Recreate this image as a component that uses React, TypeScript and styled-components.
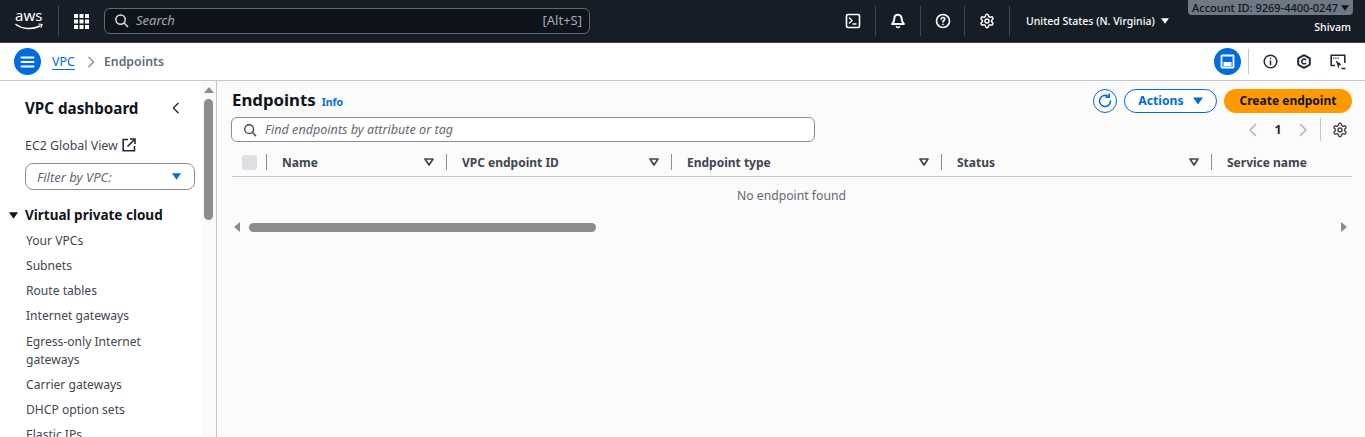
import React from "react";
import styled, { createGlobalStyle } from "styled-components";

const GlobalStyle = createGlobalStyle`
  html, body { margin: 0; padding: 0; height: 100%; overflow: hidden; }
  body { font-family: "Noto Sans", "Open Sans", sans-serif; color: #0f141a; background: #fff; }
  * { box-sizing: border-box; }
`;

const Page = styled.div`
  width: 1365px;
  height: 437px;
  display: flex;
  flex-direction: column;
  overflow: hidden;
`;

const TopBar = styled.header`
  height: 43px;
  flex: none;
  background: #161d26;
  border-bottom: 1px solid #3d4650;
  display: flex;
  align-items: center;
  color: #fff;
`;

const Logo = styled.div`
  width: 58px;
  padding-left: 15px;
  display: flex;
  align-items: center;
`;

const BarDivider = styled.span`
  width: 1px;
  height: 30px;
  background: #424650;
  flex: none;
`;

const AppsButton = styled.div`
  width: 45px;
  display: flex;
  justify-content: center;
`;

const SearchBox = styled.div`
  width: 486px;
  height: 26px;
  margin-top: -1px;
  border: 1px solid #656871;
  border-radius: 6px;
  background: #0f141a;
  display: flex;
  align-items: center;
  padding: 0 7px 1px 9px;
  font-size: 13px;
  color: #a4a9b3;
`;

const SearchText = styled.span`
  font-style: italic;
  margin-left: 7px;
  flex: 1;
`;

const TopIcons = styled.div`
  margin-left: auto;
  display: flex;
  align-items: center;
`;

const TopIcon = styled.div<{ $w: number }>`
  width: ${({ $w }) => $w}px;
  display: flex;
  justify-content: center;
`;

const Region = styled.div`
  width: 175px;
  padding-left: 16px;
  display: flex;
  align-items: center;
  gap: 6px;
  font-size: 10.5px;
  font-weight: 500;
  white-space: nowrap;
`;

const AccountBlock = styled.div`
  width: 180px;
  height: 42px;
  display: flex;
  flex-direction: column;
  align-items: flex-end;
  padding-right: 12px;
`;

const AccountChip = styled.div`
  height: 15px;
  background: #6f7885;
  color: #0f141a;
  font-size: 11px;
  font-weight: 500;
  border-radius: 0 0 4px 4px;
  padding: 0 4px;
  display: flex;
  align-items: center;
  gap: 3px;
  white-space: nowrap;
`;

const UserName = styled.div`
  font-size: 10.5px;
  font-weight: 500;
  margin-top: 5px;
  padding-right: 2px;
`;

const Crumbs = styled.div`
  height: 38px;
  flex: none;
  background: #fff;
  border-bottom: 1px solid #c6c6cd;
  display: flex;
  align-items: center;
  padding: 0 10px 0 14px;
`;

const RoundBlue = styled.div`
  width: 27px;
  height: 27px;
  border-radius: 50%;
  background: #006ce0;
  display: flex;
  align-items: center;
  justify-content: center;
  flex: none;
`;

const CrumbLink = styled.a`
  margin-left: 11px;
  font-size: 12.5px;
  color: #006ce0;
  text-decoration: underline;
  text-underline-offset: 3px;
`;

const CrumbSep = styled.span`
  margin: 0 7px 0 10px;
  display: flex;
`;

const CrumbCurrent = styled.span`
  font-size: 12.3px;
  font-weight: 600;
  color: #5f6b7a;
`;

const CrumbTools = styled.div`
  margin-left: auto;
  display: flex;
  align-items: center;
`;

const CrumbDivider = styled.span`
  width: 1px;
  height: 25px;
  background: #c6c6cd;
  margin: 0 4px 0 7px;
`;

const ToolIcon = styled.div`
  width: 34px;
  display: flex;
  justify-content: center;
`;

const Body = styled.div`
  flex: 1;
  display: flex;
  min-height: 0;
`;

const Side = styled.aside`
  width: 217px;
  flex: none;
  border-right: 1px solid #c6c6cd;
  display: flex;
  background: #fff;
`;

const SideNav = styled.nav`
  width: 202px;
  flex: none;
  padding: 16px 7px 0 9px;
  overflow: hidden;
`;

const SideHead = styled.div`
  display: flex;
  align-items: center;
  justify-content: space-between;
  padding: 0 13px 0 16px;
  font-size: 15.2px;
  font-weight: 700;
  height: 22px;
`;

const GlobalLink = styled.div`
  margin: 16px 0 0 16px;
  font-size: 12.4px;
  color: #424650;
  display: flex;
  align-items: center;
  gap: 4px;
  height: 20px;
`;

const VpcFilter = styled.div`
  margin: 8px 0 0 16px;
  width: 170px;
  height: 27px;
  border: 1px solid #8c8c94;
  border-radius: 8px;
  display: flex;
  align-items: center;
  justify-content: space-between;
  padding: 0 13px 0 11px;
  font-size: 13px;
  font-style: italic;
  color: #656871;
`;

const SectionHead = styled.div`
  margin-top: 14px;
  display: flex;
  align-items: center;
  height: 22px;
  font-size: 13.5px;
  font-weight: 700;
  gap: 7px;
`;

const NavList = styled.ul`
  list-style: none;
  margin: 2.3px 0 0 17px;
  padding: 0;
`;

const NavItem = styled.li`
  font-size: 12.1px;
  line-height: 18px;
  color: #424650;
  padding: 3.6px 0;
`;

const ScrollTrack = styled.div`
  width: 14px;
  flex: none;
  background: #fafafa;
  display: flex;
  flex-direction: column;
  align-items: center;
  padding: 6px 1px 0 0;
`;

const ScrollThumbV = styled.div`
  width: 9px;
  height: 121px;
  margin-top: 6px;
  border-radius: 5px;
  background: #8c8c8c;
`;

const Main = styled.main`
  flex: 1;
  background: #fbfbfb;
  padding: 7px 13px 0 15px;
  min-width: 0;
`;

const HeaderRow = styled.div`
  display: flex;
  align-items: center;
  height: 25px;
`;

const Title = styled.h1`
  margin: -2px 0 0;
  font-size: 16.8px;
  font-weight: 700;
`;

const InfoLink = styled.a`
  margin: 2px 0 0 6px;
  font-size: 10.5px;
  font-weight: 700;
  color: #006ce0;
`;

const Actions = styled.div`
  margin-left: auto;
  display: flex;
  align-items: center;
`;

const RefreshBtn = styled.div`
  width: 24px;
  height: 24px;
  border: 1px solid #006ce0;
  border-radius: 50%;
  display: flex;
  align-items: center;
  justify-content: center;
  margin-right: 7px;
`;

const OutlineBtn = styled.div`
  width: 93px;
  height: 24px;
  border: 1px solid #006ce0;
  border-radius: 12px;
  background: #fff;
  color: #006ce0;
  font-size: 12.2px;
  font-weight: 700;
  display: flex;
  align-items: center;
  justify-content: center;
  gap: 9px;
  margin-right: 7px;
`;

const PrimaryBtn = styled.div`
  width: 128px;
  height: 24px;
  border-radius: 12px;
  background: #ff9900;
  color: #0f141a;
  font-size: 12px;
  font-weight: 700;
  display: flex;
  align-items: center;
  justify-content: center;
`;

const FilterRow = styled.div`
  display: flex;
  align-items: center;
  height: 25px;
  margin-top: 4px;
`;

const FindBox = styled.div`
  width: 584px;
  height: 25px;
  margin-left: -1px;
  border: 1px solid #8c8c94;
  border-radius: 6px;
  background: #fff;
  display: flex;
  align-items: center;
  padding-left: 11px;
  gap: 8px;
  font-size: 12.6px;
  font-style: italic;
  color: #656871;
`;

const Pager = styled.div`
  margin-left: auto;
  display: flex;
  align-items: center;
  height: 25px;
  padding-right: 4px;
`;

const PageNum = styled.span`
  width: 36px;
  text-align: center;
  font-size: 12.5px;
  font-weight: 700;
  color: #232b37;
`;

const PagerDivider = styled.span`
  width: 1px;
  height: 23px;
  background: #c6c6cd;
  margin: 0 11px 0 10px;
`;

const TableHead = styled.div`
  margin-top: 3px;
  height: 32px;
  padding-top: 3px;
  display: grid;
  grid-template-columns: 35px 180px 225px 270px 270px 140px;
  border-bottom: 1px solid #c6c6cd;
`;

const HeadCell = styled.div`
  position: relative;
  display: flex;
  align-items: center;
  justify-content: space-between;
  padding: 0 13px 0 15px;
  font-size: 12px;
  font-weight: 700;
  color: #424650;
  white-space: nowrap;
`;

const CellRule = styled.span`
  position: absolute;
  right: 0;
  top: 6px;
  width: 1px;
  height: 16px;
  background: #8c8c94;
`;

const CheckCell = styled.div`
  position: relative;
  display: flex;
  align-items: center;
  padding-left: 10px;
`;

const CheckBox = styled.span`
  width: 15px;
  height: 15px;
  border-radius: 3px;
  background: #dedee3;
`;

const EmptyRow = styled.div`
  height: 37px;
  display: flex;
  align-items: center;
  justify-content: center;
  font-size: 12.2px;
  color: #656871;
  padding-right: 1px;
`;

const HScroll = styled.div`
  height: 10px;
  margin-top: 8px;
  display: flex;
  align-items: center;
  padding: 0 5px 0 2px;
`;

const HThumb = styled.div`
  width: 347px;
  height: 9px;
  margin-left: 9px;
  border-radius: 5px;
  background: #8c8c8c;
`;

const HEnd = styled.div`
  margin-left: auto;
  display: flex;
`;

const Stroke = { fill: "none", strokeWidth: 1.6, strokeLinecap: "round", strokeLinejoin: "round" } as const;

const SearchIcon = ({ color, size = 16 }: { color: string; size?: number }) => (
  <svg width={size} height={size} viewBox="0 0 16 16" stroke={color} {...Stroke}>
    <circle cx="7" cy="7" r="5" />
    <path d="M10.7 10.7 14.5 14.5" />
  </svg>
);

// cog with rounded lobes, same drawing in the top bar and the table pager
const GearIcon = ({ color }: { color: string }) => (
  <svg width="16" height="16" viewBox="0 0 24 24" stroke={color} {...Stroke} strokeWidth={2.2}>
    <path d="M12.22 2h-.44a2 2 0 0 0-2 2v.18a2 2 0 0 1-1 1.73l-.43.25a2 2 0 0 1-2 0l-.15-.08a2 2 0 0 0-2.73.73l-.22.38a2 2 0 0 0 .73 2.73l.15.1a2 2 0 0 1 1 1.72v.51a2 2 0 0 1-1 1.74l-.15.09a2 2 0 0 0-.73 2.73l.22.38a2 2 0 0 0 2.73.73l.15-.08a2 2 0 0 1 2 0l.43.25a2 2 0 0 1 1 1.73V20a2 2 0 0 0 2 2h.44a2 2 0 0 0 2-2v-.18a2 2 0 0 1 1-1.73l.43-.25a2 2 0 0 1 2 0l.15.08a2 2 0 0 0 2.73-.73l.22-.39a2 2 0 0 0-.73-2.73l-.15-.08a2 2 0 0 1-1-1.74v-.5a2 2 0 0 1 1-1.74l.15-.09a2 2 0 0 0 .73-2.73l-.22-.38a2 2 0 0 0-2.73-.73l-.15.08a2 2 0 0 1-2 0l-.43-.25a2 2 0 0 1-1-1.73V4a2 2 0 0 0-2-2z" />
    <circle cx="12" cy="12" r="3" />
  </svg>
);

const Chevron = ({ dir, color, size = 14 }: { dir: "left" | "right"; color: string; size?: number }) => (
  <svg width={size} height={size} viewBox="0 0 14 14" stroke={color} {...Stroke}>
    <path d={dir === "left" ? "M9.5 1.5 4 7l5.5 5.5" : "M4.5 1.5 10 7l-5.5 5.5"} />
  </svg>
);

const Caret = ({ color, w = 10, h = 7 }: { color: string; w?: number; h?: number }) => (
  <svg width={w} height={h} viewBox="0 0 10 7">
    <path d="M0 0h10L5 7z" fill={color} />
  </svg>
);

const SortIcon = () => (
  <svg width="10" height="8" viewBox="0 0 10 8" fill="none" stroke="#424650" strokeWidth="1.7" strokeLinejoin="round">
    <path d="M1 1h8L5 7z" />
  </svg>
);

const columns = ["Name", "VPC endpoint ID", "Endpoint type", "Status"];

const navItems = [
  "Your VPCs",
  "Subnets",
  "Route tables",
  "Internet gateways",
  "Egress-only Internet gateways",
  "Carrier gateways",
  "DHCP option sets",
  "Elastic IPs",
];

export default function App() {
  return (
    <Page>
      <GlobalStyle />
      <TopBar>
        <Logo>
          <svg width="32" height="34" viewBox="0 0 32 34">
            <text x="0" y="17" fontSize="15" fontFamily="Noto Sans, sans-serif" fontWeight="400" fill="#fff">aws</text>
            <path d="M1 20.5c7 5 17 5 24 1.5" fill="none" stroke="#fff" strokeWidth="1.5" strokeLinecap="round" />
            <path d="M23.5 20l3.5.4-1 3.2" fill="none" stroke="#fff" strokeWidth="1.2" />
          </svg>
        </Logo>
        <BarDivider />
        <AppsButton>
          <svg width="15" height="15" viewBox="0 0 15 15" fill="#fff">
            {[0, 5.5, 11].flatMap((y) =>
              [0, 5.5, 11].map((x) => <rect key={`${x}-${y}`} x={x} y={y} width="4" height="4" />),
            )}
          </svg>
        </AppsButton>
        <SearchBox>
          <SearchIcon color="#dedee3" size={15} />
          <SearchText>Search</SearchText>
          <span>[Alt+S]</span>
        </SearchBox>
        <TopIcons>
          <TopIcon $w={44}>
            <svg width="16" height="16" viewBox="0 0 16 16" fill="none" stroke="#fff" strokeWidth="1.6" strokeLinejoin="round" strokeLinecap="round">
              <rect x="1.5" y="1.5" width="13" height="13" rx="1.5" />
              <path d="M4.5 5 7 7.5 4.5 10M8 11h3" strokeWidth="1.4" />
            </svg>
          </TopIcon>
          <BarDivider />
          <TopIcon $w={44}>
            <svg width="16" height="16" viewBox="0 0 16 16" fill="none" stroke="#fff" strokeWidth="2" strokeLinejoin="round" strokeLinecap="round">
              <path d="M8 1.8c-2.4 0-3.7 1.9-3.7 4.1 0 2.5-.9 3.6-2.2 5h11.8c-1.3-1.4-2.2-2.5-2.2-5 0-2.2-1.3-4.1-3.7-4.1z" />
              <path d="M6.5 13.8c.4.5.9.7 1.5.7s1.1-.2 1.5-.7" strokeWidth="1.6" />
            </svg>
          </TopIcon>
          <BarDivider />
          <TopIcon $w={43}>
            <svg width="16" height="16" viewBox="0 0 16 16" fill="none" stroke="#fff" strokeWidth="1.6" strokeLinecap="round">
              <circle cx="8" cy="8" r="6.5" />
              <path d="M6.2 6.2c0-1 .8-1.7 1.8-1.7s1.8.7 1.8 1.6c0 1.4-1.8 1.4-1.8 2.8" />
              <path d="M8 11.3v.2" />
            </svg>
          </TopIcon>
          <BarDivider />
          <TopIcon $w={44}>
            <GearIcon color="#fff" />
          </TopIcon>
          <BarDivider />
          <Region>
            United States (N. Virginia) <Caret color="#fff" w={8} h={6} />
          </Region>
          <AccountBlock>
            <AccountChip>
              Account ID: 9269-4400-0247 <Caret color="#0f141a" w={8} h={6} />
            </AccountChip>
            <UserName>Shivam</UserName>
          </AccountBlock>
        </TopIcons>
      </TopBar>
      <Crumbs>
        <RoundBlue>
          <svg width="15" height="12" viewBox="0 0 15 12" stroke="#fff" strokeWidth="2" strokeLinecap="round">
            <path d="M1.5 1.5h12M1.5 6h12M1.5 10.5h12" />
          </svg>
        </RoundBlue>
        <CrumbLink>VPC</CrumbLink>
        <CrumbSep>
          <Chevron dir="right" color="#8c8c94" size={12} />
        </CrumbSep>
        <CrumbCurrent>Endpoints</CrumbCurrent>
        <CrumbTools>
          <RoundBlue>
            <svg width="15" height="15" viewBox="0 0 15 15" fill="none" stroke="#fff" strokeWidth="1.8">
              <rect x="1.5" y="1.5" width="12" height="12" rx="0.5" />
              <rect x="3.5" y="8" width="8" height="4" fill="#fff" stroke="none" />
            </svg>
          </RoundBlue>
          <CrumbDivider />
          <ToolIcon>
            <svg width="15" height="15" viewBox="0 0 16 16" fill="none" stroke="#232b37" strokeWidth="1.6" strokeLinecap="round">
              <circle cx="8" cy="8" r="6.7" />
              <path d="M8 7.5V11.5M8 4.6v.3" />
            </svg>
          </ToolIcon>
          <ToolIcon>
            <svg width="14" height="15" viewBox="0 0 14 15" fill="none" stroke="#232b37" strokeWidth="2" strokeLinejoin="round">
              <path d="M7 1.2 12.8 4.4v6.2L7 13.8 1.2 10.6V4.4z" />
              <path d="M9 6A2.4 2.4 0 1 0 9 9" strokeWidth="1.6" />
            </svg>
          </ToolIcon>
          <ToolIcon>
            <svg width="16" height="16" viewBox="0 0 16 16" fill="none" stroke="#232b37" strokeWidth="1.6" strokeLinejoin="miter">
              <path d="M5 11.5H1.2V1.2h13.6V9" />
              <path d="M3.2 4.2h1M5.4 4.2h1M7.6 4.2h1" strokeWidth="1.4" />
              <path d="M6.4 7.2 11 10.6 8.6 11v2.6z" fill="#232b37" strokeWidth="0.8" />
              <path d="M11.5 14.5H15.5" />
            </svg>
          </ToolIcon>
        </CrumbTools>
      </Crumbs>
      <Body>
        <Side>
          <SideNav>
            <SideHead>
              VPC dashboard
              <Chevron dir="left" color="#232b37" size={12} />
            </SideHead>
            <GlobalLink>
              EC2 Global View
              <svg width="14" height="14" viewBox="0 0 14 14" fill="none" stroke="#232b37" strokeWidth="1.6">
                <path d="M6 1.5H1.2v11.3h11.3V8" />
                <path d="M5.5 8.5 12.5 1.5M8 1h5v5" />
              </svg>
            </GlobalLink>
            <VpcFilter>
              Filter by VPC:
              <Caret color="#006ce0" w={9} h={7} />
            </VpcFilter>
            <SectionHead>
              <Caret color="#0f141a" w={9} h={7} />
              Virtual private cloud
            </SectionHead>
            <NavList>
              {navItems.map((item) => (
                <NavItem key={item}>{item}</NavItem>
              ))}
            </NavList>
          </SideNav>
          <ScrollTrack>
            <svg width="10" height="6" viewBox="0 0 10 6">
              <path d="M5 0 10 6H0z" fill="#8c8c8c" />
            </svg>
            <ScrollThumbV />
          </ScrollTrack>
        </Side>
        <Main>
          <HeaderRow>
            <Title>Endpoints</Title>
            <InfoLink>Info</InfoLink>
            <Actions>
              <RefreshBtn>
                <svg width="16" height="16" viewBox="0 0 16 16" fill="none" stroke="#006ce0" strokeWidth="1.6" strokeLinecap="round" strokeLinejoin="round">
                  <path d="M13.5 8A5.5 5.5 0 1 1 11.5 3.7" />
                  <path d="M12.2 1v3.2H9" />
                </svg>
              </RefreshBtn>
              <OutlineBtn>
                Actions
                <Caret color="#006ce0" w={10} h={8} />
              </OutlineBtn>
              <PrimaryBtn>Create endpoint</PrimaryBtn>
            </Actions>
          </HeaderRow>
          <FilterRow>
            <FindBox>
              <SearchIcon color="#424650" size={14} />
              Find endpoints by attribute or tag
            </FindBox>
            <Pager>
              <Chevron dir="left" color="#b4b4bb" />
              <PageNum>1</PageNum>
              <Chevron dir="right" color="#b4b4bb" />
              <PagerDivider />
              <GearIcon color="#424650" />
            </Pager>
          </FilterRow>
          <TableHead>
            <CheckCell>
              <CheckBox />
              <CellRule />
            </CheckCell>
            {columns.map((name) => (
              <HeadCell key={name}>
                {name}
                <SortIcon />
                <CellRule />
              </HeadCell>
            ))}
            <HeadCell>Service name</HeadCell>
          </TableHead>
          <EmptyRow>No endpoint found</EmptyRow>
          <HScroll>
            <svg width="6" height="10" viewBox="0 0 6 10">
              <path d="M0 5 6 0v10z" fill="#8c8c8c" />
            </svg>
            <HThumb />
            <HEnd>
              <svg width="6" height="10" viewBox="0 0 6 10">
                <path d="M6 5 0 0v10z" fill="#8c8c8c" />
              </svg>
            </HEnd>
          </HScroll>
        </Main>
      </Body>
    </Page>
  );
}
